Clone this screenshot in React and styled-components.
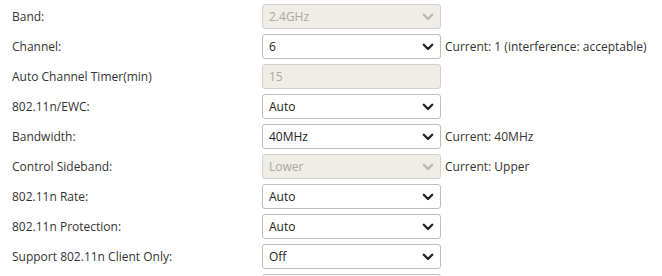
import React from 'react'
import styled, {createGlobalStyle} from 'styled-components'

const GlobalStyle = createGlobalStyle`
    body {
        margin: 0;
        background: #fff;
        font-family: "Open Sans", "Noto Sans", sans-serif;
        color: #333;
    }
`

// last row only peeks in at the bottom edge, so it carries no text
const rows = [
    {label: 'Band:', value: '2.4GHz', kind: 'select', disabled: true},
    {label: 'Channel:', value: '6', kind: 'select', note: 'Current: 1 (interference: acceptable)'},
    {label: 'Auto Channel Timer(min)', value: '15', kind: 'input', disabled: true},
    {label: '802.11n/EWC:', value: 'Auto', kind: 'select'},
    {label: 'Bandwidth:', value: '40MHz', kind: 'select', note: 'Current: 40MHz'},
    {label: 'Control Sideband:', value: 'Lower', kind: 'select', disabled: true, note: 'Current: Upper'},
    {label: '802.11n Rate:', value: 'Auto', kind: 'select'},
    {label: '802.11n Protection:', value: 'Auto', kind: 'select'},
    {label: 'Support 802.11n Client Only:', value: 'Off', kind: 'select'},
    {label: '', value: '', kind: 'select'},
]

function Chevron({disabled}) {
    return (
        <Arrow width="12" height="8" viewBox="0 0 12 8">
            <path d="M1.8 1.8 L6 6 L10.2 1.8" fill="none"
                stroke={disabled ? '#b8b8b4' : '#222'} strokeWidth="2.3" strokeLinecap="round" strokeLinejoin="round" />
        </Arrow>
    )
}

function App() {
    return (
        <Form>
            <GlobalStyle />
            {rows.map((row, index) => (
                <Row key={index}>
                    <Label>{row.label}</Label>
                    <Field disabled={row.disabled}>
                        <Value disabled={row.disabled}>{row.value}</Value>
                        {row.kind === 'select' && <Chevron disabled={row.disabled} />}
                    </Field>
                    {row.note && <Note>{row.note}</Note>}
                </Row>
            ))}
        </Form>
    )
}

export default App

const Form = styled.div`
    padding: 4px 0 0 12px;
    display: flex;
    flex-direction: column;
    gap: 5px;
`

const Row = styled.div`
    display: flex;
    align-items: center;
    height: 25px;
`

const Label = styled.div`
    width: 250px;
    font-size: 12px;
    white-space: nowrap;
`

const Field = styled.div`
    position: relative;
    box-sizing: border-box;
    width: 179px;
    height: 25px;
    border: 1px solid ${props => props.disabled ? '#d3d1ca' : '#bdbdbd'};
    border-radius: 3px;
    background: ${props => props.disabled ? '#efede5' : '#fff'};
    display: flex;
    align-items: center;
    padding: 0 6px;
`

const Value = styled.span`
    font-size: 12px;
    color: ${props => props.disabled ? '#a9a9a4' : '#222'};
`

const Arrow = styled.svg`
    position: absolute;
    right: 6px;
    top: 8px;
`

const Note = styled.div`
    margin-left: 4px;
    font-size: 12px;
    white-space: nowrap;
`
